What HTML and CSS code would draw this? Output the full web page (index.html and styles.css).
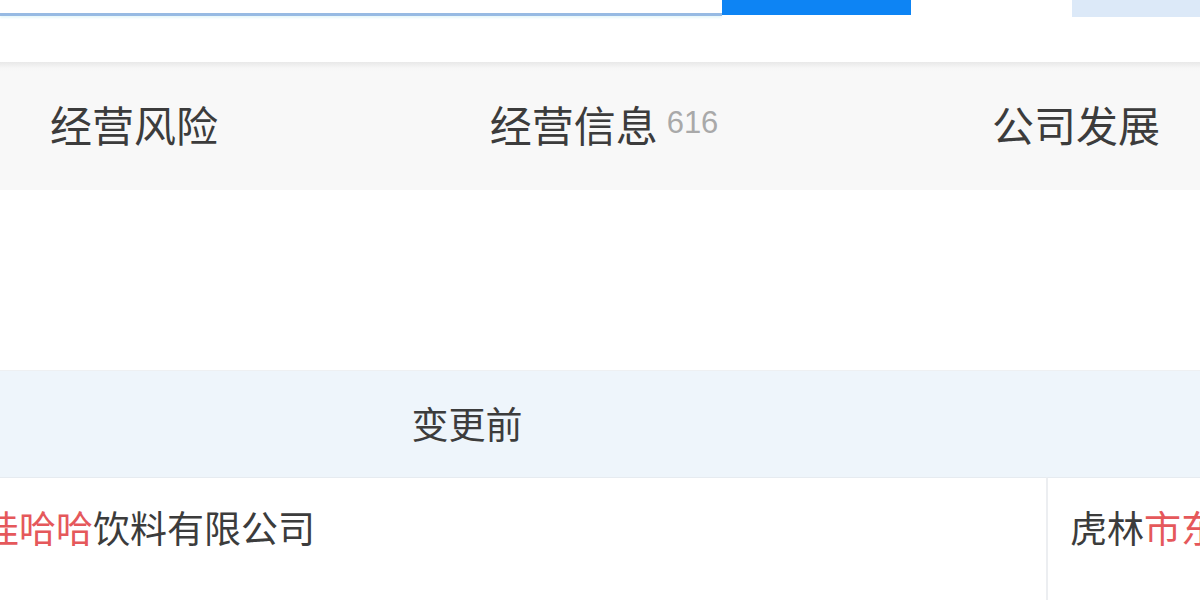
FILE: index.html
```html
<!DOCTYPE html>
<html>
<head>
  <meta charset="utf-8">
  <title>企业详情 - 变更记录</title>
  <link rel="stylesheet" href="styles.css">
</head>
<body>
  <div class="search-bar">
    <div class="search-input"></div>
    <button class="search-btn"></button>
    <div class="search-side"></div>
  </div>

  <div class="tabs">
    <div class="tab-list">
      <div class="tab">经营风险</div>
      <div class="tab tab-mid">经营信息<span class="count">616</span></div>
      <div class="tab">公司发展</div>
    </div>
  </div>

  <div class="spacer"></div>

  <div class="change-table">
    <div class="th">变更前</div>
    <div class="th">变更后</div>
    <div class="td before"><span class="hl">娃哈哈</span>饮料有限公司</div>
    <div class="td after">虎林<span class="hl">市东方</span>饮料有限公司</div>
  </div>
</body>
</html>
```

FILE: styles.css
```css
html, body {
  margin: 0;
  padding: 0;
  background: #fff;
  overflow: hidden;
}
body {
  width: 1200px;
  height: 600px;
  font-family: "Noto Sans CJK SC", "Liberation Sans", sans-serif;
  color: #3a3a3a;
}

/* search strip cut at the top */
.search-bar {
  display: flex;
  align-items: flex-start;
  height: 62px;
}
.search-input {
  width: 722px;
  height: 13px;
  background: #fff;
  border-bottom: 3px solid #97bae3;
  box-shadow: 0 2px 2px #e8f8fb;
}
.search-btn {
  width: 189px;
  height: 15px;
  padding: 0;
  border: none;
  background: #0d84f4;
}
.search-side {
  width: 128px;
  height: 17px;
  margin-left: 161px;
  background: #dce9f8;
}

/* tab bar */
.tabs {
  height: 128px;
  background: linear-gradient(#e8e8e8, #f6f6f6 6px, #f8f8f8 10px);
  overflow: hidden;
}
.tab-list {
  display: flex;
  height: 100%;
  margin-left: -101px;
  padding-bottom: 6px;
  box-sizing: border-box;
}
.tab {
  flex: 0 0 470px;
  display: flex;
  align-items: center;
  justify-content: center;
  font-size: 42px;
  color: #3c3c3c;
  white-space: nowrap;
}
.tab-mid {
  padding-right: 2px;
}
.count {
  margin-left: 9px;
  font-family: "Liberation Sans", sans-serif;
  font-size: 31px;
  color: #a9a9a9;
}

.spacer {
  height: 180px;
}

/* change record table */
.change-table {
  display: grid;
  grid-template-columns: 1158px 1158px;
  margin-left: -112px;
}
.th {
  height: 107px;
  border-top: 1px solid #eef0f2;
  background: #eef5fb;
  display: flex;
  align-items: center;
  justify-content: center;
  font-size: 37px;
  color: #3c3c3c;
  padding-bottom: 2px;
  box-sizing: border-box;
}
.td {
  height: 160px;
  border-top: 1px solid #e6ebf0;
  font-size: 37px;
  line-height: 98px;
  white-space: nowrap;
  overflow: hidden;
  color: #3c3c3c;
}
.before {
  padding-left: 94px;
}
.after {
  padding-left: 22px;
  border-left: 2px solid #eceef1;
}
.hl {
  color: #e5585b;
}
```
